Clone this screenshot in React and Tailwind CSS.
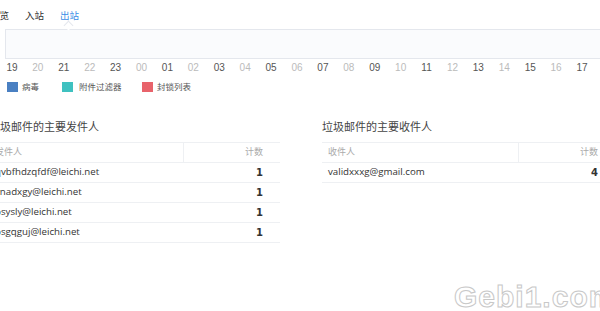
import React from 'react';

const hours = ['19', '20', '21', '22', '23', '00', '01', '02', '03', '04', '05', '06', '07', '08', '09', '10', '11', '12', '13', '14', '15', '16', '17'];

const senders = [
  { addr: 'qvbfhdzqfdf@leichi.net', n: 1 },
  { addr: 'vnadxgy@leichi.net', n: 1 },
  { addr: 'psysly@leichi.net', n: 1 },
  { addr: 'psgqguj@leichi.net', n: 1 },
];

const receivers = [{ addr: 'validxxxg@gmail.com', n: 4 }];

function SpamTable({ title, who, rows, className }) {
  return (
    <div className={className}>
      <h3 className="text-[11px] leading-[14px] text-[#444]">{title}</h3>
      <table className="w-full mt-[8px] border-collapse">
        <thead>
          <tr className="border-t border-b border-[#eef0f3] h-[20px] text-[9px]">
            <th className="text-left font-normal text-[#aaa] pl-[6px] border-r border-[#eef0f3]">{who}</th>
            <th className="text-right font-normal text-[#aaa] pr-[17px] w-[97px]">计数</th>
          </tr>
        </thead>
        <tbody>
          {rows.map((r) => (
            <tr key={r.addr} className="border-b border-[#eef0f3] h-[20px]">
              <td className="pl-[6px] text-[9.7px] text-[#333] font-['Open_Sans',sans-serif]">{r.addr}</td>
              <td className="text-right pr-[17px] text-[10px] font-bold text-[#333] font-['DejaVu_Sans',sans-serif]">{r.n}</td>
            </tr>
          ))}
        </tbody>
      </table>
    </div>
  );
}

export default function App() {
  return (
    <div className="relative w-[600px] h-[311px] overflow-hidden bg-white font-['Liberation_Sans','Noto_Sans_CJK_SC',sans-serif]">
      {/* tabs */}
      <div className="flex items-center h-[29px] pt-[4px] text-[9.5px] text-[#333] ml-[-10px] gap-[16px]">
        <span>概览</span>
        <span>入站</span>
        <span className="relative text-[#3a8ee6]">
          出站
          <span className="absolute left-[5px] top-[13px] w-[7px] h-[7px] rotate-45 bg-white border-t border-l border-[#e4e7ed]" />
        </span>
      </div>

      {/* chart */}
      <div className="ml-[5px] h-[30px] bg-[#fafbfd] border-t border-l border-b border-[#e4e7ed]" />

      <div className="grid grid-cols-[repeat(23,minmax(0,1fr))] w-[596px] ml-[-1px] mt-[2px] text-[10px] leading-[14px]">
        {hours.map((h, i) => (
          <span key={h} className={`text-center ${i % 2 === 0 ? 'text-[#555]' : 'text-[#bbb]'}`}>{h}</span>
        ))}
      </div>

      {/* legend */}
      <div className="flex items-center mt-[6px] ml-[7px] h-[12px] text-[8.5px] text-[#555]">
        <span className="w-[11px] h-[10px] bg-[#4a80c2]" />
        <span className="ml-[4px] w-[40px]">病毒</span>
        <span className="w-[11px] h-[10px] bg-[#3fc1c0]" />
        <span className="ml-[6px] w-[63px]">附件过滤器</span>
        <span className="w-[11px] h-[10px] bg-[#e8636b]" />
        <span className="ml-[4px]">封锁列表</span>
      </div>

      {/* tables */}
      <div className="flex mt-[27px] ml-[-11px]">
        <SpamTable className="w-[291px] shrink-0" title="垃圾邮件的主要发件人" who="发件人" rows={senders} />
        <SpamTable className="w-[293px] shrink-0 ml-[42px]" title="垃圾邮件的主要收件人" who="收件人" rows={receivers} />
      </div>

      {/* watermark */}
      <div className="absolute left-[454px] top-[274px] text-[30px] font-bold tracking-[1px] text-transparent [-webkit-text-stroke:1px_#c8c8c8] font-['Liberation_Sans',sans-serif]">
        Gebi1.com
      </div>
    </div>
  );
}
